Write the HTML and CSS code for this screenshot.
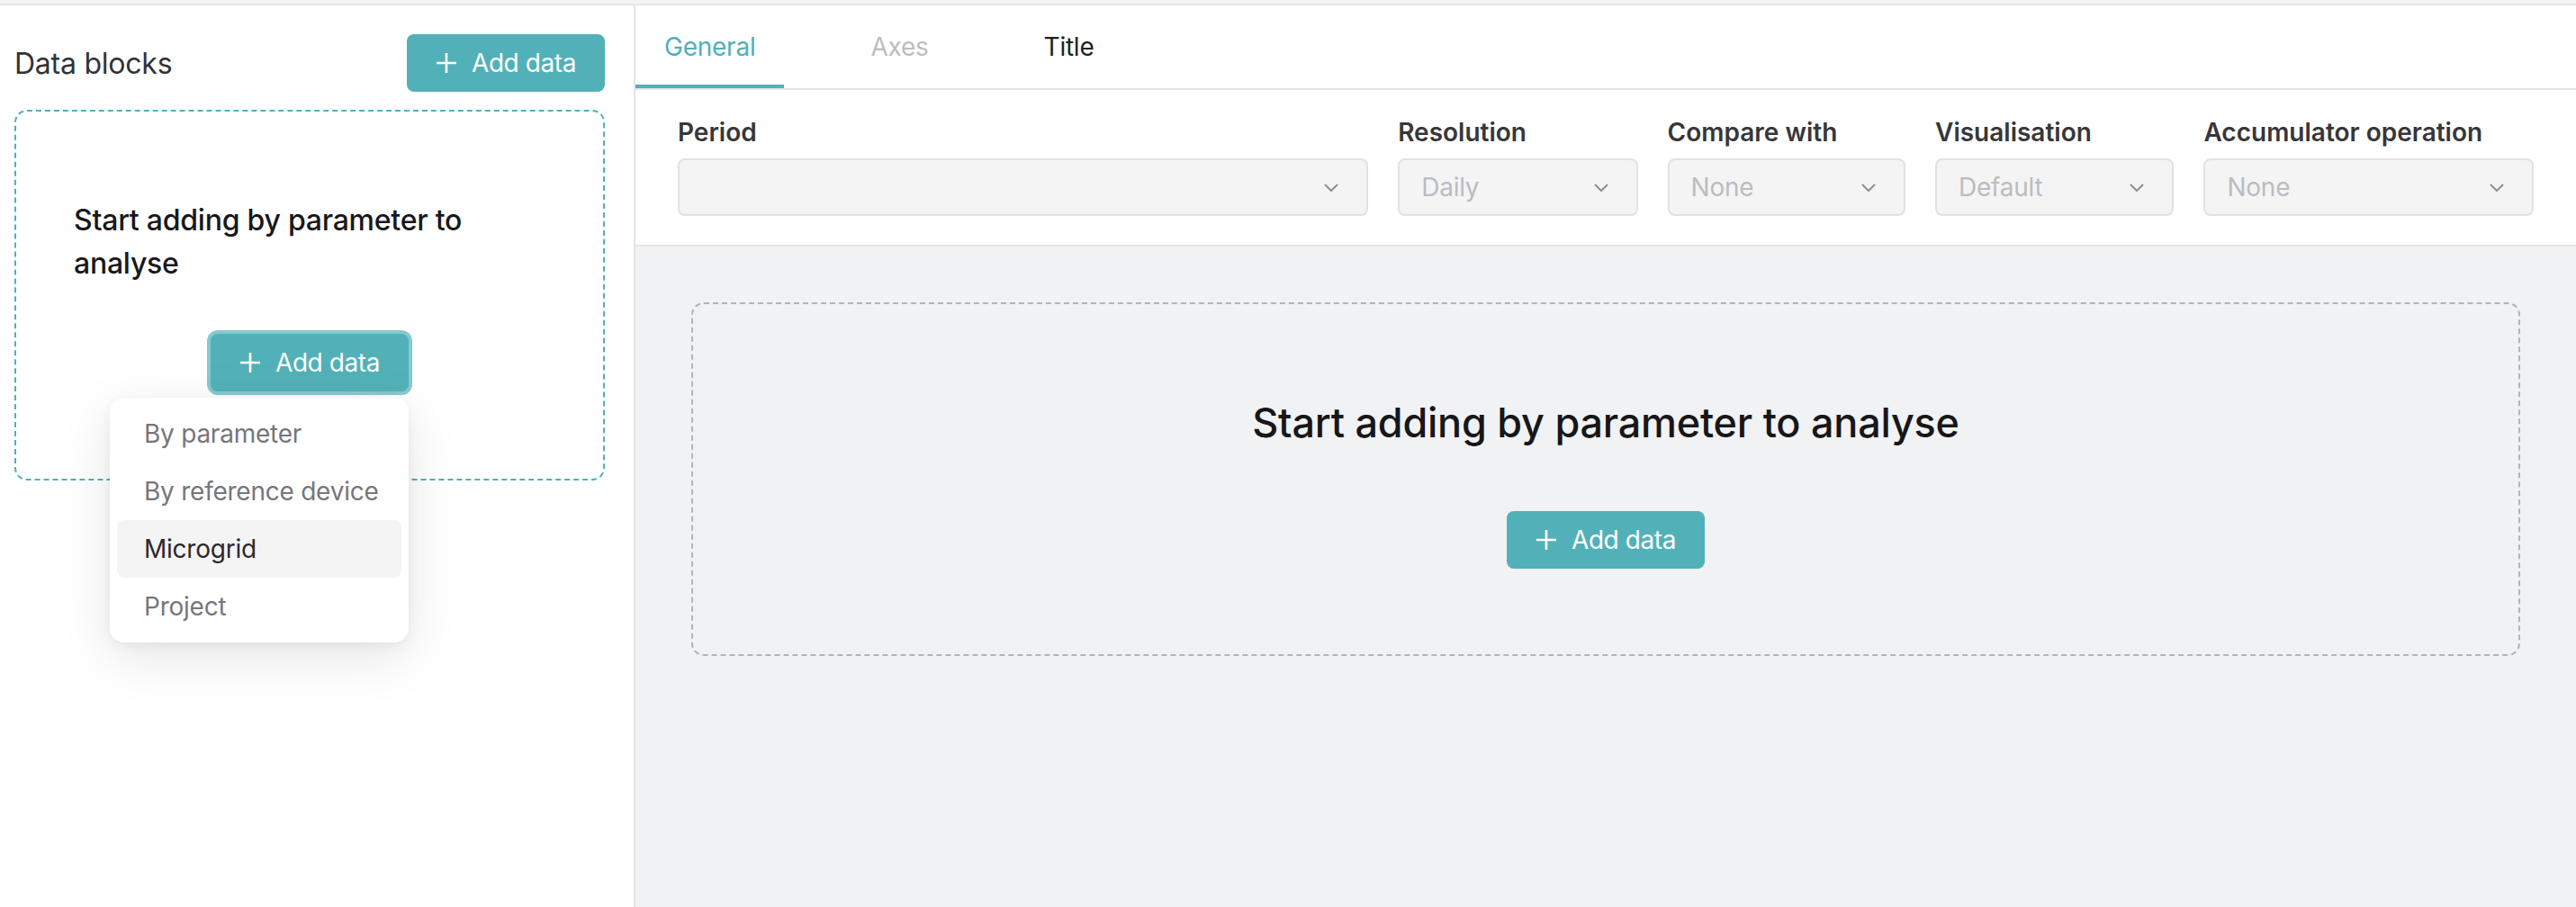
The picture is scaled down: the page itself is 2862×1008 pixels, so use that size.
FILE: index.html
```html
<!DOCTYPE html>
<html lang="en">
<head>
  <meta charset="UTF-8" />
  <meta name="viewport" content="width=device-width, initial-scale=1.0" />
  <title>Analysis</title>
  <link rel="stylesheet" href="styles.css">
</head>
<body>
  <div class="topbar"></div>
  <div class="layout">
    <aside class="sidebar">
      <div class="sidebar-head">
        <h2>Data blocks</h2>
        <button class="btn">
          <svg class="plus" viewBox="0 0 24 24"><path d="M12 1v22M1 12h22" /></svg>
          Add data
        </button>
      </div>
      <div class="drop-zone">
        <p>Start adding by parameter to analyse</p>
        <div class="drop-action">
          <div class="menu-anchor">
            <button class="btn btn-focus">
              <svg class="plus" viewBox="0 0 24 24"><path d="M12 1v22M1 12h22" /></svg>
              Add data
            </button>
            <ul class="menu">
              <li>By parameter</li>
              <li>By reference device</li>
              <li class="active">Microgrid</li>
              <li>Project</li>
            </ul>
          </div>
        </div>
      </div>
    </aside>

    <main class="panel">
      <nav class="tabs">
        <a class="tab active">General</a>
        <a class="tab disabled">Axes</a>
        <a class="tab">Title</a>
      </nav>

      <section class="filters">
        <div class="field">
          <label>Period</label>
          <div class="select"><span></span><svg class="chevron" viewBox="0 0 16 9"><path d="M1 1l7 7 7-7" /></svg></div>
        </div>
        <div class="field">
          <label>Resolution</label>
          <div class="select"><span>Daily</span><svg class="chevron" viewBox="0 0 16 9"><path d="M1 1l7 7 7-7" /></svg></div>
        </div>
        <div class="field">
          <label>Compare with</label>
          <div class="select"><span>None</span><svg class="chevron" viewBox="0 0 16 9"><path d="M1 1l7 7 7-7" /></svg></div>
        </div>
        <div class="field">
          <label>Visualisation</label>
          <div class="select"><span>Default</span><svg class="chevron" viewBox="0 0 16 9"><path d="M1 1l7 7 7-7" /></svg></div>
        </div>
        <div class="field">
          <label>Accumulator operation</label>
          <div class="select"><span>None</span><svg class="chevron" viewBox="0 0 16 9"><path d="M1 1l7 7 7-7" /></svg></div>
        </div>
      </section>

      <section class="canvas">
        <div class="empty">
          <h1>Start adding by parameter to analyse</h1>
          <button class="btn">
            <svg class="plus" viewBox="0 0 24 24"><path d="M12 1v22M1 12h22" /></svg>
            Add data
          </button>
        </div>
      </section>
    </main>
  </div>
</body>
</html>
```

FILE: styles.css
```css
* {
  box-sizing: border-box;
}
html, body {
  height: 100%;
}
body {
  margin: 0;
  font-family: Inter, "Noto Sans", sans-serif;
  letter-spacing: -0.015em;
  color: #18181b;
  background: #fff;
  display: flex;
  flex-direction: column;
  overflow: hidden;
}
.topbar {
  height: 6px;
  background: #f3f4f6;
  border-bottom: 2px solid #e5e6e8;
  flex-shrink: 0;
}
.layout {
  flex: 1;
  display: flex;
  min-height: 0;
}

/* Sidebar */
.sidebar {
  width: 706px;
  flex-shrink: 0;
  border-right: 2px solid #e4e4e7;
  padding: 32px 32px 0 16px;
}
.sidebar-head {
  display: flex;
  align-items: center;
  justify-content: space-between;
  margin-bottom: 20px;
}
.sidebar-head h2 {
  margin: 0;
  font-size: 32px;
  font-weight: 400;
  color: #333336;
}
.btn {
  height: 64px;
  padding: 0 32px;
  display: inline-flex;
  align-items: center;
  gap: 16px;
  border: none;
  border-radius: 8px;
  background: #52b1b8;
  color: #fff;
  font-family: inherit;
  font-size: 28px;
  letter-spacing: -0.015em;
  cursor: pointer;
}
.btn .plus {
  width: 24px;
  height: 24px;
  fill: none;
  stroke: #fff;
  stroke-width: 2.6;
}
.btn-focus {
  box-shadow: 0 0 0 4px #86c9ce;
}
.drop-zone {
  border: 2px dashed #4fb1b8;
  border-radius: 14px;
  padding: 97px 64px 97px;
}
.drop-zone p {
  margin: 0;
  font-size: 32px;
  font-weight: 500;
  line-height: 48px;
  color: #18181b;
}
.drop-action {
  margin-top: 54px;
  display: flex;
  justify-content: center;
}
.menu-anchor {
  position: relative;
}
.menu {
  position: absolute;
  right: 0;
  top: calc(100% + 7px);
  width: 332px;
  margin: 0;
  padding: 8px;
  list-style: none;
  background: #fff;
  border-radius: 16px;
  box-shadow: 0 16px 60px rgba(0, 0, 0, 0.10), 0 4px 14px rgba(0, 0, 0, 0.06);
  z-index: 2;
}
.menu li {
  height: 64px;
  line-height: 64px;
  padding: 0 30px;
  border-radius: 8px;
  font-size: 28px;
  color: #76767b;
  white-space: nowrap;
}
.menu li.active {
  background: #f4f4f5;
  color: #2a2a2d;
}

/* Main panel */
.panel {
  flex: 1;
  display: flex;
  flex-direction: column;
  min-width: 0;
}
.tabs {
  display: flex;
  gap: 64px;
  border-bottom: 2px solid #e4e4e7;
}
.tab {
  height: 92px;
  padding: 4px 32px 0;
  display: flex;
  align-items: center;
  font-size: 28px;
  color: #1f1f22;
  border-bottom: 4px solid transparent;
}
.tab.active {
  color: #4fb0b8;
  border-bottom-color: #52b1b8;
}
.tab.disabled {
  color: #bdbdc0;
}
.filters {
  display: grid;
  grid-template-columns: 766fr 266fr 264fr 265fr 366fr;
  gap: 33px;
  padding: 27px 47px 32px;
  border-bottom: 2px solid #e4e4e7;
}
.field label {
  display: block;
  font-size: 28px;
  font-weight: 600;
  line-height: 40px;
  letter-spacing: 0;
  color: #37373a;
  margin-bottom: 9px;
  white-space: nowrap;
}
.select {
  height: 64px;
  display: flex;
  align-items: center;
  justify-content: space-between;
  padding: 0 31px 0 24px;
  border: 2px solid #e2e2e4;
  border-radius: 8px;
  background: #f4f4f5;
  font-size: 28px;
  color: #bcbcbf;
}
.chevron {
  width: 16px;
  height: 9px;
  fill: none;
  stroke: #8e8e92;
  stroke-width: 2;
}
.canvas {
  flex: 1;
  background: #f1f2f4;
  padding: 62px;
}
.empty {
  border: 2px dashed #b4b4b7;
  border-radius: 14px;
  padding: 100px 0 95px;
  display: flex;
  flex-direction: column;
  align-items: center;
}
.empty h1 {
  margin: 0 0 66px;
  font-size: 45px;
  font-weight: 500;
  line-height: 64px;
  color: #17171a;
}
```
